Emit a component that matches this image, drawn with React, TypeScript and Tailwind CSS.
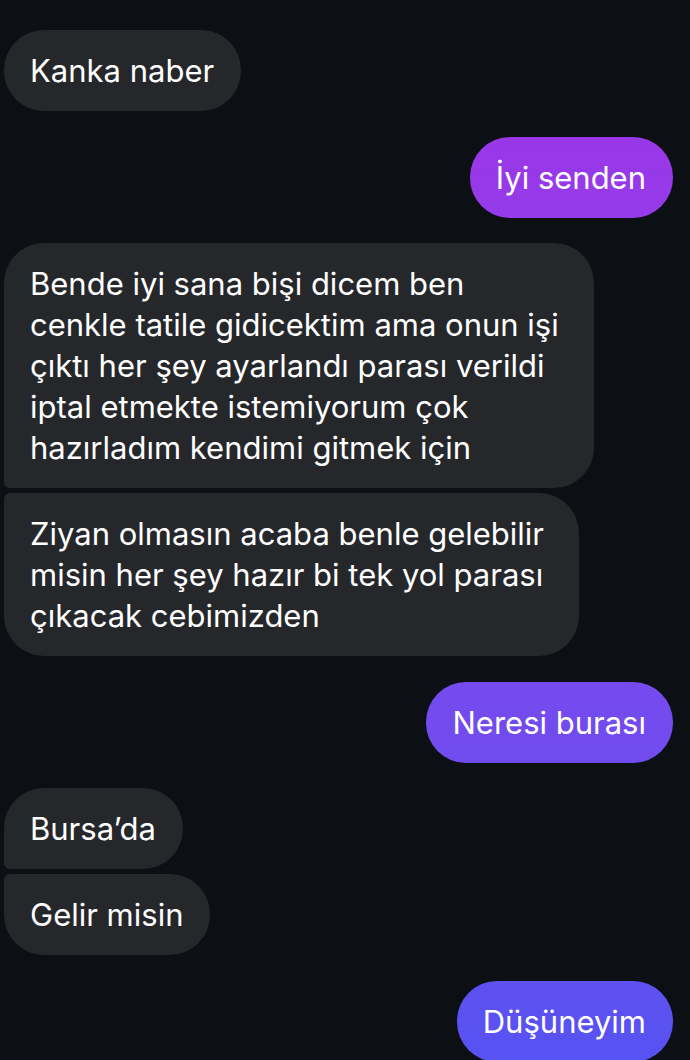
import React from 'react';

type Msg = {
  lines: string[];
  corners: string;
};

const received = 'bg-[#25272b] text-white';
const sent =
  'bg-fixed bg-linear-to-b from-[#a230e6] to-[#5752f2] text-white';

function Bubble({ lines, corners, className }: Msg & { className: string }) {
  const multi = lines.length > 1;
  return (
    <div
      className={`w-fit py-5 pl-[26px] ${multi ? 'pr-[35px]' : 'pr-[27px]'} text-[31px] leading-[41px] ${corners} ${className}`}
    >
      {lines.map((l, i) => (
        <div key={i} className="whitespace-nowrap">
          {l}
        </div>
      ))}
    </div>
  );
}

export default function App() {
  return (
    <div
      className="min-h-screen bg-[#0c0f13] pt-[30px] pb-10 flex flex-col gap-[25.5px]"
      style={{ fontFamily: 'Inter, "Noto Sans", sans-serif' }}
    >
      <div className="pl-1">
        <Bubble lines={['Kanka naber']} corners="rounded-[40px]" className={received} />
      </div>

      <div className="flex justify-end pr-[17px]">
        <Bubble lines={['İyi senden']} corners="rounded-[40px]" className={sent} />
      </div>

      <div className="pl-1 flex flex-col gap-[5px]">
        <Bubble
          lines={[
            'Bende iyi sana bişi dicem ben',
            'cenkle tatile gidicektim ama onun işi',
            'çıktı her şey ayarlandı parası verildi',
            'iptal etmekte istemiyorum çok',
            'hazırladım kendimi gitmek için',
          ]}
          corners="rounded-[40px] rounded-bl-[6px]"
          className={received}
        />
        <Bubble
          lines={[
            'Ziyan olmasın acaba benle gelebilir',
            'misin her şey hazır bi tek yol parası',
            'çıkacak cebimizden',
          ]}
          corners="rounded-[40px] rounded-tl-[6px]"
          className={received}
        />
      </div>

      <div className="flex justify-end pr-[17px]">
        <Bubble lines={['Neresi burası']} corners="rounded-[40px]" className={sent} />
      </div>

      <div className="pl-1 flex flex-col gap-[5px]">
        <Bubble
          lines={['Bursa’da']}
          corners="rounded-[40px] rounded-bl-[6px]"
          className={received}
        />
        <Bubble
          lines={['Gelir misin']}
          corners="rounded-[40px] rounded-tl-[6px]"
          className={received}
        />
      </div>

      <div className="flex justify-end pr-[17px]">
        <Bubble lines={['Düşüneyim']} corners="rounded-[40px]" className={sent} />
      </div>
    </div>
  );
}
